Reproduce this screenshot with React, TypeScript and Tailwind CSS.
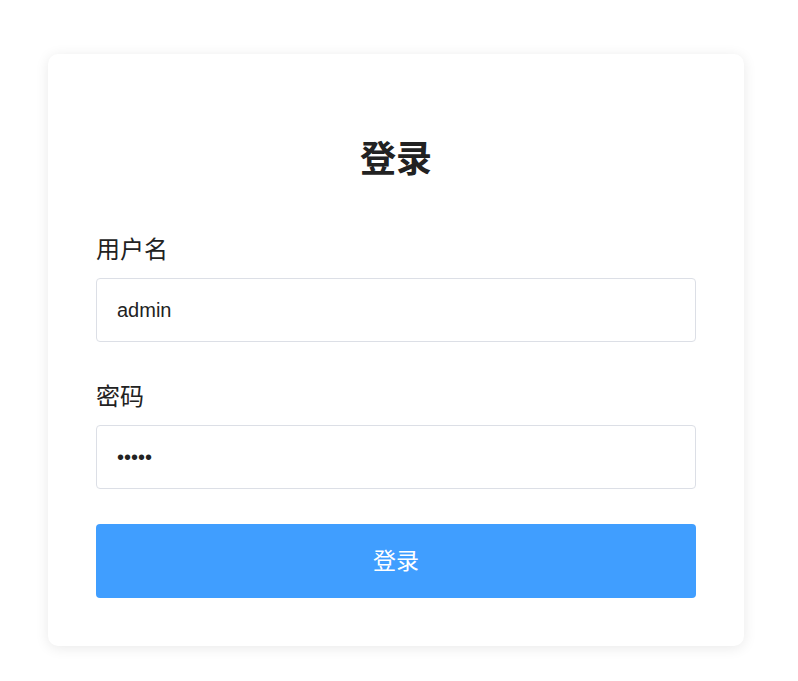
import { useState } from "react";

const FONT = "font-['Liberation_Sans','Noto_Sans_CJK_SC',sans-serif]";

export default function App() {
  const [user, setUser] = useState("admin");
  const [pwd, setPwd] = useState("12345");

  return (
    <div className={`min-h-screen bg-white pt-[54px] px-12 ${FONT}`}>
      <div className="w-[696px] rounded-[10px] bg-white px-12 pt-[79px] pb-12 shadow-[0_2px_14px_rgba(0,0,0,0.09)]">
        <h1 className="text-center text-[36px] font-bold leading-[54px] text-[#222]">
          登录
        </h1>

        <form className="mt-[46px] flex flex-col" onSubmit={(e) => e.preventDefault()}>
          <label className="text-[24px] leading-[33px] text-[#222]">用户名</label>
          <input
            value={user}
            onChange={(e) => setUser(e.target.value)}
            className="mt-[12px] h-[64px] w-full rounded-[4px] border border-[#dcdfe6] px-5 text-[20px] text-[#222] outline-none"
          />

          <label className="mt-[38px] text-[24px] leading-[33px] text-[#222]">密码</label>
          <input
            type="password"
            value={pwd}
            onChange={(e) => setPwd(e.target.value)}
            className="mt-[12px] h-[64px] w-full rounded-[4px] border border-[#dcdfe6] px-5 text-[20px] text-[#222] outline-none"
          />

          <button
            type="submit"
            className="mt-[35px] h-[74px] w-full rounded-[4px] bg-[#409eff] text-[23px] text-white"
          >
            登录
          </button>
        </form>
      </div>
    </div>
  );
}
